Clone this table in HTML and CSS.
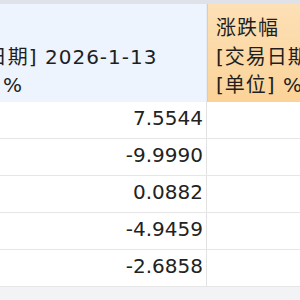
FILE: index.html
```html
<!DOCTYPE html>
<html lang="zh-CN">
<head>
<meta charset="utf-8">
<link rel="stylesheet" href="styles.css">
</head>
<body>
<div class="topbar"></div>
<div class="viewport">
  <div class="grid">
    <div class="th th-blue">涨跌幅<br>[交易日期] 2026-1-13<br>[单位] %</div>
    <div class="th th-orange">涨跌幅<br>[交易日期] 2026-1-13<br>[单位] %</div>
    <div class="td num">7.5544</div><div class="td"></div>
    <div class="td num">-9.9990</div><div class="td"></div>
    <div class="td num">0.0882</div><div class="td"></div>
    <div class="td num">-4.9459</div><div class="td"></div>
    <div class="td num">-2.6858</div><div class="td"></div>
  </div>
</div>
</body>
</html>
```
FILE: styles.css
```css
html, body {
  margin: 0;
  padding: 0;
  background: #f2f3f5;
  width: 300px;
  height: 300px;
  overflow: hidden;
}
.topbar {
  height: 4px;
  background: #dfe3e9;
}
.viewport {
  width: 300px;
  overflow: hidden;
}
.grid {
  display: grid;
  grid-template-columns: 279px 160px;
  margin-left: -72px;
  font-family: "DejaVu Sans", "Noto Sans CJK SC", sans-serif;
  font-size: 20px;
  color: #222;
  background: #fff;
}
.th {
  height: 98px;
  box-sizing: border-box;
  padding: 10px 8px 0 8px;
  line-height: 28.5px;
  white-space: nowrap;
  overflow: hidden;
  color: #1f1f1f;
  letter-spacing: 1px;
}
.th-blue {
  background: #edf4fd;
  border-right: 1px solid #e4ebf3;
}
.th-orange {
  background: linear-gradient(#fde0b6, #fbd398);
  border-left: 1px solid #f6c98b;
}
.td {
  height: 37px;
  box-sizing: border-box;
  border-bottom: 1px solid #e6e6e6;
  background: #fff;
  line-height: 33px;
  white-space: nowrap;
}
.num {
  text-align: right;
  padding-right: 3px;
  border-right: 1px solid #e2e2e2;
}
```
